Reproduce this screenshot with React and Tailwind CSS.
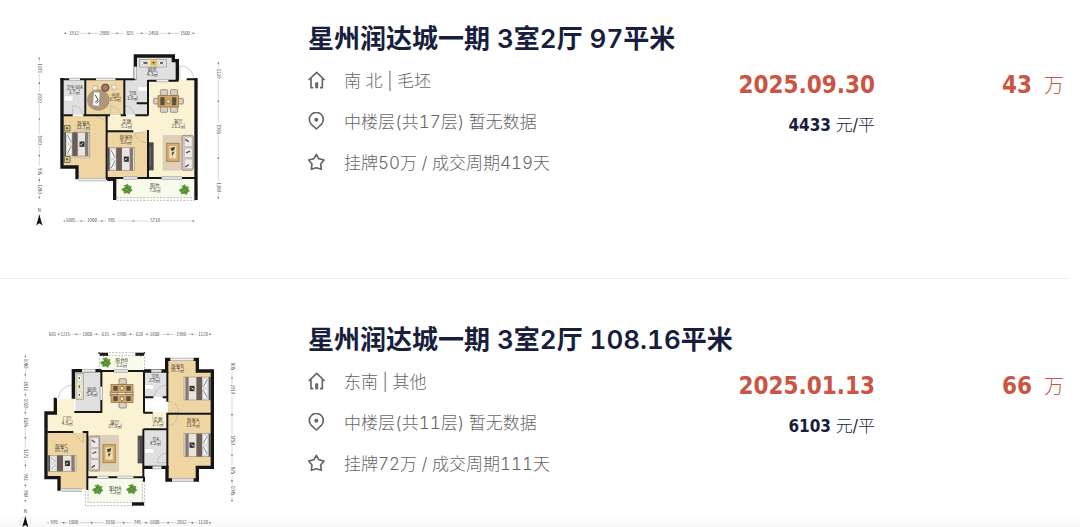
import React from 'react';

const HomeIcon = () => (
  <svg className="w-[18px] h-[18px] mb-1 shrink-0" viewBox="0 0 54 54" fill="none" stroke="currentColor" strokeWidth="5" aria-hidden="true">
    <path d="M2 27 L26 4 L50 27" strokeLinejoin="round" />
    <path d="M9 22 V50 H16 M43 22 V50 H36" strokeLinejoin="round" />
    <path d="M26 34 V52" strokeWidth="9" />
  </svg>
);

const PinIcon = () => (
  <svg className="w-[18px] h-[18px] mb-1 shrink-0" viewBox="0 0 54 54" fill="none" stroke="currentColor" strokeWidth="5" aria-hidden="true">
    <path d="M25 51 L10 37 A21 21 0 1 1 40 37 Z" strokeLinejoin="round" />
    <circle cx="25" cy="23" r="6" fill="currentColor" stroke="none" />
  </svg>
);

const StarIcon = () => (
  <svg className="w-[18px] h-[18px] mb-1 shrink-0" viewBox="0 0 54 54" fill="none" stroke="currentColor" strokeWidth="5" aria-hidden="true">
    <path d="M25 4 L32 17 L48 21 L38 33 L40 49 L25 44 L10 49 L12 33 L2 21 L18 17 Z" strokeLinejoin="round" />
  </svg>
);

const RoomLabel = ({ x, y, name, area }) => (
  <text x={x} y={y} textAnchor="middle" fontSize="14" fill="#3b3833">
    {name}
    <tspan x={x} dy="14">{area}㎡</tspan>
  </text>
);

// a run of measurements, along the top/bottom or turned along a side
const Dimensions = ({ x, y, length, vertical, marks }) => (
  <g transform={`translate(${x} ${y})${vertical ? ' rotate(90)' : ''}`}>
    <path d={`M0 0 H${length}`} stroke="#b5b5b5" strokeWidth="1.5" />
    <path d={`M0 0 l6 -3 v6 z M${length} 0 l-6 -3 v6 z`} fill="#777" />
    {marks.map(([at, value], i) => (
      <g key={i}>
        <rect x={at - 17} y="-6" width="34" height="12" fill="#fff" />
        <text x={at} y="4" textAnchor="middle" fontSize="13" fill="#444">{value}</text>
      </g>
    ))}
    {marks.slice(1).map(([at], i) => (
      <circle key={i} cx={(at + marks[i][0]) / 2} cy="0" r="2.5" fill="#777" />
    ))}
  </g>
);

const Compass = ({ x, y }) => (
  <g transform={`translate(${x} ${y})`}>
    <text x="0" y="-26" textAnchor="middle" fontSize="13" fill="#333">N</text>
    <circle r="16" fill="#fff" stroke="#ddd" strokeWidth="2" />
    <path d="M0 -18 L9 15 L0 9 L-9 15 Z" fill="#111" />
  </g>
);

const Bed = ({ x, y, width, height, flip }) => (
  <g transform={`translate(${flip ? x + width : x} ${y}) scale(${flip ? -1 : 1} 1)`}>
    <rect width={width} height={height} fill="#e9e5de" stroke="#9d958a" strokeWidth="2" />
    <rect width="5" height={height} fill="#55504b" />
    <rect x="8" y="5" width="14" height={height / 2 - 8} rx="4" fill="#fff" stroke="#8597a0" />
    <rect x="8" y={height / 2 + 3} width="14" height={height / 2 - 8} rx="4" fill="#fff" stroke="#8597a0" />
    <path d={`M10 8 L20 ${height / 2 - 6} M10 ${height - 8} L20 ${height / 2 + 6}`} stroke="#6d8896" strokeWidth="3" />
    <rect x={width * 0.31} width={width * 0.22} height={height} fill="#6c5e56" />
    <rect x={width - 14} width="10" height={height} fill="#857a71" />
    <rect x={width * 0.6} y={height / 2 - 8} width="15" height="16" fill="#333" />
    <path d={`M${width * 0.63} ${height / 2 + 3} l7 -5`} stroke="#eee" strokeWidth="3" />
  </g>
);

const Chair = ({ x, y }) => (
  <rect x={x} y={y} width="22" height="17" rx="3" fill="#d9cfc4" stroke="#75685d" strokeWidth="2" />
);

const TableTop = ({ x, y, width, height }) => (
  <g transform={`translate(${x} ${y})`}>
    <rect width={width} height={height} fill="#cfa866" stroke="#8d6b3c" strokeWidth="2" />
    <path d={`M7 5 h13 v${height - 10} h-13z M${width - 20} 5 h13 v${height - 10} h-13z`} fill="#5a5048" />
    <circle cx={width / 2} cy={height / 2} r="6" fill="#ede0c4" stroke="#7b5a31" strokeWidth="2" />
  </g>
);

const Sofa = ({ x, y, height }) => (
  <g transform={`translate(${x} ${y})`}>
    <rect width="34" height={height} rx="6" fill="#d3cac5" stroke="#766c68" strokeWidth="2" />
    {[0, 1, 2].map((i) => (
      <rect key={i} x="7" y={5 + (i * (height - 6)) / 3} width="24" height={(height - 18) / 3} rx="4" fill="#eeeae7" stroke="#857b76" />
    ))}
    <path d={`M10 12 l10 7 M12 ${height / 2} l12 -5 M10 ${height - 10} l10 -7`} stroke="#54504d" strokeWidth="4" />
  </g>
);

const CoffeeTable = ({ x, y }) => (
  <g transform={`translate(${x} ${y})`}>
    <rect width="37" height="54" fill="#d6ae70" stroke="#a98348" strokeWidth="3" />
    <rect x="8" y="8" width="21" height="37" fill="#f0dfbd" />
    <path d="M11 14 l14 -4 l-2 10 l-8 4 z M15 28 l9 -4 l-7 14 z" fill="#51402f" />
  </g>
);

const Plant = ({ x, y }) => (
  <g transform={`translate(${x} ${y})`}>
    <path d="M-4 -6 L-11 -13 L-4 -13 L1 -17 L6 -11 L14 -10 L12 -3 L17 3 L11 7 L7 15 L0 11 L-9 13 L-11 6 L-17 1 L-12 -4 Z" fill="#62993b" />
    <circle r="8" fill="#47832b" />
    <path d="M-7 -4 L6 6 M6 -6 L-6 7" stroke="#8cc257" strokeWidth="2" />
  </g>
);

const WoodPattern = ({ id }) => (
  <pattern id={id} width="36" height="12" patternUnits="userSpaceOnUse">
    <rect width="36" height="12" fill="#f1d7a6" />
    <path d="M0 0 H36 M0 6 H36 M9 0 V6 M27 6 V12" stroke="#e7c78d" strokeWidth="1" />
  </pattern>
);

const FloorPlanA = () => (
  <svg className="w-[220px] h-[210px] ml-5" viewBox="0 0 660 630" role="img" aria-label="户型图" fontFamily="'Noto Sans CJK SC', sans-serif">
    <defs><WoodPattern id="wood-a" /></defs>
    {/* floors */}
    <path d="M385 180 H528 V472 H385 V332 H262 V288 H385 Z" fill="#fbf1d3" />
    <path d="M130 180 H196 V284 H130 Z M314 180 H385 V284 H314 Z M346 112 H460 V126 H470 V180 H346 Z" fill="#dfe0df" />
    <path d="M200 180 H312 V285 H200 Z M130 288 H262 V478 H175 V438 H130 Z M262 336 H384 V473 H262 Z" fill="url(#wood-a)" />
    <path d="M286 477 H526 V535 H286 Z" fill="#f7fbeb" />
    {/* furniture */}
    <ellipse cx="235" cy="240" rx="34" ry="32" fill="#ad9779" />
    <path d="M222 216 L239 218 L236 258 L219 255 Z" fill="#fff" />
    <path d="M226 225 l8 15 l-9 7 M230 250 l5 -6" stroke="#444" strokeWidth="3" fill="none" />
    <circle cx="256" cy="203" r="11" fill="#a67865" stroke="#5d4239" strokeWidth="3" />
    <path d="M221 196 l13 4 l-5 12 l-12 -4z M274 197 l13 -4 l3 13 l-12 3z" fill="#eee" stroke="#877359" />
    <rect x="133" y="228" width="26" height="15" rx="3" fill="#fff" stroke="#bbb" />
    <rect x="354" y="200" width="29" height="14" rx="3" fill="#fff" stroke="#bbb" />
    <rect x="358" y="118" width="81" height="23" fill="#ece8db" stroke="#96938b" strokeWidth="2" />
    <path d="M363 124 h20 v10 h-20z M415 124 h18 v10 h-18z" fill="#fff" stroke="#888" />
    <rect x="391" y="121" width="20" height="16" fill="#e1bc4d" />
    <path d="M370 129 h12 M398 128 h5 M420 129 h9" stroke="#333" strokeWidth="4" />
    <Chair x={421} y={209} />
    <Chair x={451} y={209} />
    <Chair x={421} y={260} />
    <Chair x={451} y={260} />
    <Chair x={401} y={235} />
    <Chair x={468} y={235} />
    <TableTop x={414} y={227} width={62} height={34} />
    <rect x="160" y="328" width="52" height="88" fill="#d8cab0" />
    <Bed x={133} y={337} width={76} height={71} />
    <Bed x={264} y={383} width={79} height={69} />
    <path d="M133 317 h17 v16 h-17z M133 410 h17 v17 h-17z" fill="#e9e0b0" stroke="#6d6840" strokeWidth="3" />
    <circle cx="141" cy="325" r="4" fill="#6c6d3c" />
    <circle cx="141" cy="418" r="4" fill="#6c6d3c" />
    <rect x="428" y="345" width="64" height="107" fill="#ddcfb8" />
    <CoffeeTable x={440} y={370} />
    <Sofa x={486} y={346} height={105} />
    <rect x="387" y="367" width="14" height="84" fill="#4b4b4e" />
    <path d="M391 380 v56" stroke="#888" strokeWidth="2" />
    <Plant x={321} y={508} />
    <Plant x={493} y={510} />
    {/* door swings */}
    <path d="M480 178 V137 A43 43 0 0 1 522 178 M225 287 L258 302 V288 M158 284 V257 A28 28 0 0 1 188 284 M315 258 A28 28 0 0 1 343 284 M382 332 L343 340 A38 38 0 0 0 378 367 M272 285 V258 A30 30 0 0 1 302 285" fill="none" stroke="#b9b3a8" strokeWidth="2" />
    {/* walls */}
    <g fill="none" stroke="#151515">
      <path d="M126 174 V441 H171 V478 M346 178 V108 H460 V122 H472 V182 M528 175 V540 M262 478 H284 V540" strokeWidth="10" />
      <path d="M121 178 H346 M196 180 V286 M313 180 V286 M384 180 V255 M384 286 V250 H350 M130 286 H158 M190 286 H270 M302 286 H318 M346 286 H385 M260 288 V480 M260 334 H340 M384 330 V475 M384 474 H528 M262 474 H384 M384 182 H475 M500 178 H532" strokeWidth="6" />
    </g>
    <path d="M148 178 H180 M228 178 H286 M175 479 H258 M310 474 H352 M425 474 H486 M410 182 H445 M346 140 V176" stroke="#aaa" strokeWidth="10" />
    <path d="M148 178 H180 M228 178 H286 M175 479 H258 M310 474 H352 M425 474 H486 M410 182 H445 M346 140 V176" stroke="#eee" strokeWidth="5" />
    <path d="M290 533 H526 M290 541 H526" stroke="#999" strokeWidth="2" strokeDasharray="6 4" />
    <RoomLabel x={163} y={207} name="卫生间A" area="3.7" />
    <RoomLabel x={286} y={230} name="书房" area="6.5" />
    <RoomLabel x={337} y={225} name="卫B" area="3.0" />
    <RoomLabel x={397} y={154} name="厨房" area="4.3" />
    <RoomLabel x={190} y={314} name="卧室A" area="12.7" />
    <RoomLabel x={320} y={309} name="走廊" area="5.1" />
    <RoomLabel x={475} y={309} name="客厅" area="23.2" />
    <RoomLabel x={318} y={357} name="卧室B" area="8.6" />
    <RoomLabel x={405} y={501} name="阳台" area="7.8" />
    <Dimensions x={132} y={40} length={392} marks={[[30, '1912'], [121, '2900'], [198, '825'], [268, '2450'], [363, '1500']]} />
    <Dimensions x={130} y={603} length={394} marks={[[22, '1085'], [86, '1900'], [145, '985'], [275, '5710']]} />
    <Dimensions x={58} y={112} length={424} vertical marks={[[33, '1071'], [122, '2929'], [248, '3900'], [342, '905'], [395, '1280']]} />
    <Dimensions x={595} y={125} length={412} vertical marks={[[36, '1220'], [202, '7005'], [377, '1280']]} />
    <Compass x={58} y={601} />
  </svg>
);

const FloorPlanB = () => (
  <svg className="w-[240px] h-[210px] ml-[10px]" viewBox="0 3 720 630" role="img" aria-label="户型图" fontFamily="'Noto Sans CJK SC', sans-serif">
    <defs><WoodPattern id="wood-b" /></defs>
    {/* floors */}
    <path d="M276 155 H400 V276 H472 V328 H400 V471 H232 V335 H110 V280 H140 V236 H192 V276 H276 Z" fill="#fbf1d3" />
    <path d="M196 156 H271 V274 H196 Z M402 156 H470 V230 H402 Z M402 331 H470 V439 H402 Z" fill="#dfe0df" />
    <path d="M474 121 H560 V157 H604 V279 H474 Z M474 284 H604 V440 H560 V476 H474 Z M112 338 H230 V508 H150 V470 H112 Z" fill="url(#wood-b)" />
    <path d="M274 108 H398 V152 H274 Z M235 475 H399 V545 H235 Z" fill="#f7fbeb" />
    {/* furniture */}
    <rect x="198" y="160" width="22" height="78" fill="#ece5cc" stroke="#96938b" strokeWidth="2" />
    <path d="M202 166 h13 v18 h-13z M202 216 h13 v17 h-13z" fill="#fff" stroke="#888" />
    <path d="M208 171 v7 M208 196 v8 M208 221 v7" stroke="#7a6532" strokeWidth="4" />
    <Chair x={327} y={176} />
    <Chair x={327} y={247} />
    <Chair x={301} y={212} />
    <Chair x={347} y={212} />
    <TableTop x={303} y={193} width={66} height={24} />
    <TableTop x={303} y={224} width={66} height={24} />
    <rect x="404" y="195" width="28" height="13" rx="3" fill="#fff" stroke="#bbb" />
    <rect x="404" y="386" width="28" height="14" rx="3" fill="#fff" stroke="#bbb" />
    <Bed x={522} y={171} width={79} height={69} flip />
    <Bed x={522} y={341} width={79} height={69} flip />
    <Bed x={115} y={406} width={83} height={48} />
    <rect x="255" y="345" width="72" height="110" fill="#ddcfb8" />
    <Sofa x={235} y={348} height={105} />
    <CoffeeTable x={279} y={374} />
    <rect x="383" y="347" width="15" height="83" fill="#4b4b4e" />
    <path d="M387 360 v56" stroke="#888" strokeWidth="2" />
    <Plant x={287} y={128} />
    <Plant x={263} y={509} />
    <Plant x={365} y={508} />
    {/* door swings */}
    <path d="M190 236 V195 A46 46 0 0 0 144 235 M432 230 A36 36 0 0 1 468 196 M474 244 A34 34 0 0 1 507 278 H474 M474 318 A34 34 0 0 0 503 285 M188 335 L219 369 L222 338 M470 399 A30 30 0 0 0 441 428 H470 M428 278 V302" fill="none" stroke="#b9b3a8" strokeWidth="2" />
    {/* walls */}
    <g fill="none" stroke="#151515">
      <path d="M190 236 V152 H274 M140 238 H136 V279 H108 V473 H147 V512 M402 153 H470 V118 H482 M550 118 H562 V153 H607 V442 H562 V480 H550 M486 480 H471 V442 H402" strokeWidth="10" />
      <path d="M193 276 H276 M274 150 V278 M274 153 H402 M402 153 V278 M400 232 H430 M458 232 H472 M400 278 H428 M472 153 V245 M472 278 V442 M472 281 H606 M400 328 H472 M400 328 V472 M112 336 H190 M218 336 H232 V510 M232 472 H402 M402 470 V485" strokeWidth="6" />
      <path d="M270 103 H294 M376 103 H402 M366 552 H402" strokeWidth="10" />
      <path d="M265 98 L282 108 M405 98 L390 108" strokeWidth="4" />
    </g>
    <path d="M216 152 H256 M424 153 H454 M482 118 H550 M486 480 H550 M154 510 H216 M428 443 H454 M262 472 H295 M322 472 H370 M312 153 H354 M274 200 V240" stroke="#aaa" strokeWidth="10" />
    <path d="M216 152 H256 M424 153 H454 M482 118 H550 M486 480 H550 M154 510 H216 M428 443 H454 M262 472 H295 M322 472 H370 M312 153 H354 M274 200 V240" stroke="#eee" strokeWidth="5" />
    <path d="M268 150 V98 H404 V150 M274 106 H400 M226 512 V557 H404 V480 M234 512 V547 H366 M397 480 V547" fill="none" stroke="#999" strokeWidth="2" strokeDasharray="6 4" />
    <RoomLabel x={246} y={213} name="厨房" area="5.4" />
    <RoomLabel x={335} y={127} name="阳台B" area="3.2" />
    <RoomLabel x={434} y={173} name="卫B" area="2.9" />
    <RoomLabel x={502} y={143} name="卧室B" area="10.7" />
    <RoomLabel x={172} y={300} name="门厅" area="4.8" />
    <RoomLabel x={315} y={311} name="客厅" area="27.9" />
    <RoomLabel x={444} y={304} name="走廊" area="2.7" />
    <RoomLabel x={549} y={307} name="卧室A" area="13.4" />
    <RoomLabel x={154} y={383} name="卧室C" area="10.7" />
    <RoomLabel x={436} y={362} name="卫A" area="4.2" />
    <RoomLabel x={316} y={509} name="阳台A" area="7.2" />
    <Dimensions x={112} y={43} length={492} marks={[[15, '665'], [54, '1215'], [120, '1800'], [174, '615'], [223, '1980'], [276, '620'], [322, '1600'], [402, '1980'], [467, '1120']]} />
    <Dimensions x={112} y={608} length={492} marks={[[20, '970'], [78, '1800'], [188, '3330'], [270, '745'], [322, '1600'], [403, '2012'], [467, '1120']]} />
    <Dimensions x={46} y={106} length={440} vertical marks={[[25, '1080'], [92, '2812'], [145, '1020'], [200, '1505'], [295, '3272'], [365, '902'], [415, '980']]} />
    <Dimensions x={666} y={122} length={424} vertical marks={[[18, '805'], [86, '2910'], [238, '3750'], [330, '875'], [390, '1005']]} />
    <Compass x={46} y={606} />
  </svg>
);

const deals = [
  {
    id: 1,
    Plan: FloorPlanA,
    title: '星州润达城一期 3室2厅 97平米',
    house: '南 北 | 毛坯',
    position: '中楼层(共17层) 暂无数据',
    cycle: '挂牌50万 / 成交周期419天',
    date: '2025.09.30',
    total: '43',
    unit: '4433',
  },
  {
    id: 2,
    Plan: FloorPlanB,
    title: '星州润达城一期 3室2厅 108.16平米',
    house: '东南 | 其他',
    position: '中楼层(共11层) 暂无数据',
    cycle: '挂牌72万 / 成交周期111天',
    date: '2025.01.13',
    total: '66',
    unit: '6103',
  },
];

const DealItem = ({ deal }) => {
  const { Plan } = deal;

  return (
    <li className="flex mr-3 pt-[42px] first:pt-5 pb-12 border-b border-[#eeeeee]">
      <div className="w-[308px] shrink-0">
        <Plan />
      </div>
      <div className="flex-1 min-w-0 pt-px pr-1">
        <h2 className="text-[26px] leading-9 font-semibold tabular-nums text-[#181e3c] font-[Inter,'Noto_Sans_CJK_SC',sans-serif]">
          {deal.title}
        </h2>
        <div className="flex mt-1">
          <ul className="flex-1 text-[17px] leading-[41px] font-light tabular-nums text-[#666666] font-[Inter,'Noto_Sans_CJK_SC',sans-serif]">
            <li className="flex items-center gap-[18px]"><HomeIcon />{deal.house}</li>
            <li className="flex items-center gap-[18px]"><PinIcon />{deal.position}</li>
            <li className="flex items-center gap-[18px]"><StarIcon />{deal.cycle}</li>
          </ul>
          <div className="pt-1 text-right font-['DejaVu_Sans_Condensed','Noto_Sans_CJK_SC',sans-serif]">
            <div className="text-2xl leading-10 font-bold text-[#cb5545]">{deal.date}</div>
            <div className="text-[17px] leading-10 font-light text-[#181e3c]">
              <span className="font-bold">{deal.unit}</span> 元/平
            </div>
          </div>
          <div className="w-[189px] pt-1 text-right text-[#cb5545] font-['DejaVu_Sans_Condensed','Noto_Sans_CJK_SC',sans-serif]">
            <span className="text-2xl leading-10 font-bold">{deal.total}</span>
            <span className="ml-3 text-xl leading-10 font-light">万</span>
          </div>
        </div>
      </div>
    </li>
  );
};

const App = () => {
  return (
    <main className="relative h-screen overflow-hidden bg-white">
      <ul>
        {deals.map((deal) => (
          <DealItem key={deal.id} deal={deal} />
        ))}
      </ul>
      <div className="absolute inset-x-0 bottom-0 h-3 bg-linear-to-b from-transparent to-black/3" />
    </main>
  );
};

export default App;
